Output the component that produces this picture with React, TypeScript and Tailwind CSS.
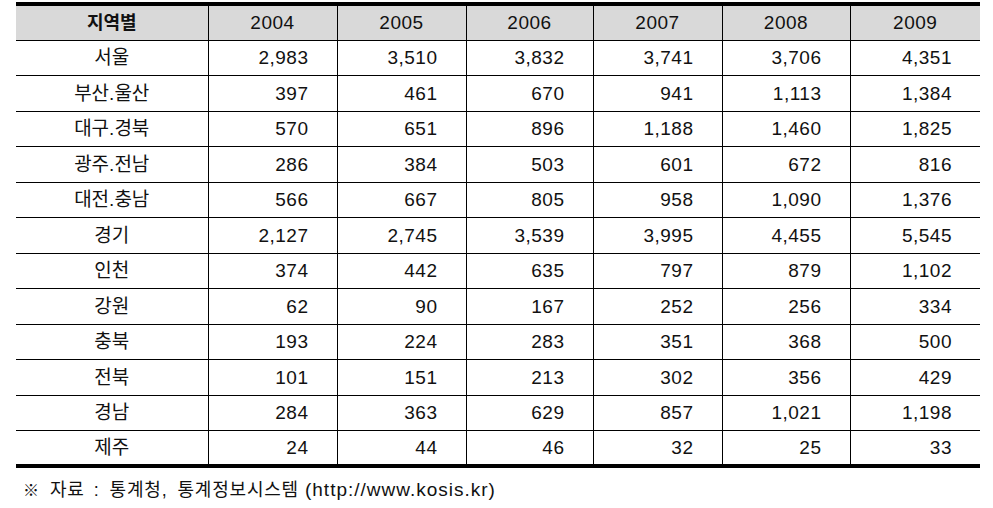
const years = ["2004", "2005", "2006", "2007", "2008", "2009"];

const rows: [string, string[]][] = [
  ["서울", ["2,983", "3,510", "3,832", "3,741", "3,706", "4,351"]],
  ["부산.울산", ["397", "461", "670", "941", "1,113", "1,384"]],
  ["대구.경북", ["570", "651", "896", "1,188", "1,460", "1,825"]],
  ["광주.전남", ["286", "384", "503", "601", "672", "816"]],
  ["대전.충남", ["566", "667", "805", "958", "1,090", "1,376"]],
  ["경기", ["2,127", "2,745", "3,539", "3,995", "4,455", "5,545"]],
  ["인천", ["374", "442", "635", "797", "879", "1,102"]],
  ["강원", ["62", "90", "167", "252", "256", "334"]],
  ["충북", ["193", "224", "283", "351", "368", "500"]],
  ["전북", ["101", "151", "213", "302", "356", "429"]],
  ["경남", ["284", "363", "629", "857", "1,021", "1,198"]],
  ["제주", ["24", "44", "46", "32", "25", "33"]],
];

const widths = ["w-[192px]", "w-[129px]", "w-[129px]", "w-[127px]", "w-[129px]", "w-[128px]", "w-[130px]"];

export default function App() {
  return (
    <div
      className="w-[993px] h-[508px] bg-white text-[#111] pt-[2px]"
      style={{ fontFamily: '"Liberation Sans", "Noto Sans CJK KR", sans-serif' }}
    >
      <table className="ml-[16px] border-collapse text-[19px] tracking-[0.5px] leading-none">
        <colgroup>
          {widths.map((w, i) => (
            <col key={i} className={w} />
          ))}
        </colgroup>
        <thead>
          <tr className="bg-[#d9d9d9] border-t-[4px] border-b border-black h-[36px]">
            <th className="font-bold text-center text-[18px] tracking-normal">지역별</th>
            {years.map((y) => (
              <th key={y} className="font-normal text-center border-l border-black">
                {y}
              </th>
            ))}
          </tr>
        </thead>
        <tbody>
          {rows.map(([region, vals], ri) => (
            <tr
              key={region}
              className={
                ri === rows.length - 1
                  ? "h-[35.5px] border-b-[4px] border-black"
                  : "h-[35.5px] border-b border-black"
              }
            >
              <td className="text-center text-[19px] tracking-normal">{region}</td>
              {vals.map((v, i) => (
                <td key={i} className="text-right pr-[28px] border-l border-black">
                  {v}
                </td>
              ))}
            </tr>
          ))}
        </tbody>
      </table>
      {/* source note */}
      <div className="flex items-baseline ml-[23px] mt-[12px] text-[18px] tracking-[0.8px] leading-none whitespace-nowrap">
        <span className="w-[17px] text-[16px]">※</span>
        <span className="ml-[10px]">자료</span>
        <span className="ml-[9px]">:</span>
        <span className="ml-[10px]">통계청,</span>
        <span className="ml-[10px]">통계정보시스템</span>
        <span className="ml-[6px] text-[19px] tracking-[1px]">(http://www.kosis.kr)</span>
      </div>
    </div>
  );
}
